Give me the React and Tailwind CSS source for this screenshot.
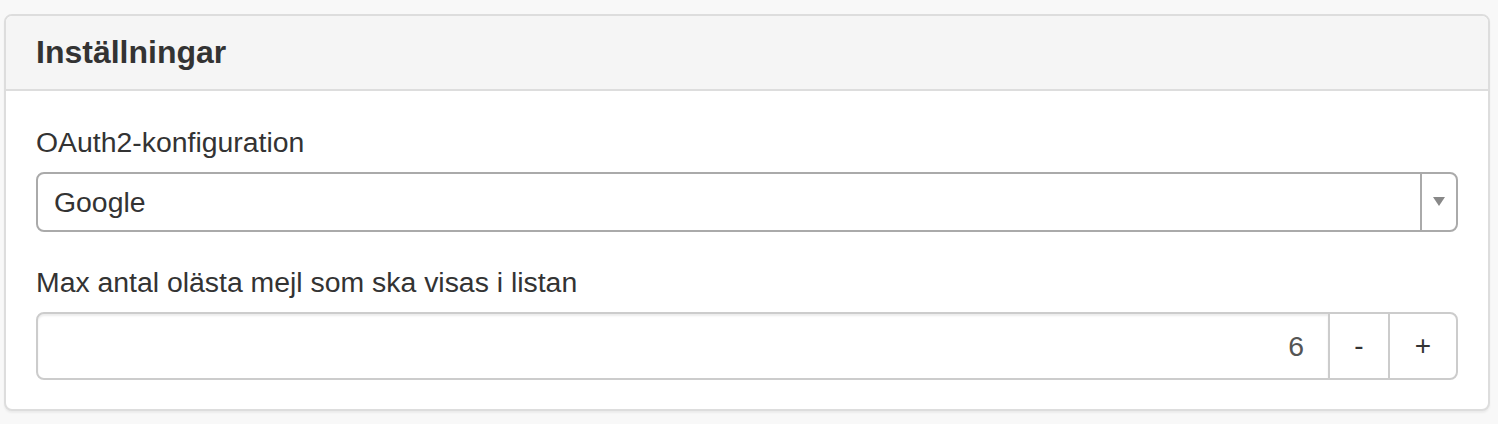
import React, { useState } from 'react';

const App = () => {
    const [count, setCount] = useState(6);

    return (
        <div className="min-h-[424px] bg-[#f8f8f8] pl-[4px] pr-[8px] pt-[14px] font-['Liberation_Sans',Arial,sans-serif] text-[#333]">
            <div className="rounded-[8px] border-2 border-[#ddd] bg-white shadow-[0_2px_2px_rgba(0,0,0,0.05)]">
                {/* Panel heading */}
                <div className="rounded-t-[6px] border-b-2 border-[#ddd] bg-[#f5f5f5] px-[30px] py-[19px]">
                    <h3 className="text-[32px] font-bold leading-[35px]">Inställningar</h3>
                </div>

                {/* Panel body */}
                <div className="px-[30px] pt-[31px] pb-[29px]">
                    <label className="mb-[10px] block text-[28.4px] leading-[40px]">OAuth2-konfiguration</label>
                    <div className="flex h-[60px] items-stretch overflow-hidden rounded-[8px] border-2 border-[#aaa] bg-white">
                        <span className="flex flex-1 items-center pl-[16px] text-[28.4px] text-[#333]">Google</span>
                        <span className="flex w-[36px] items-center justify-center border-l-2 border-[#aaa] pb-[2px]">
                            <svg width="12" height="9" viewBox="0 0 12 9">
                                <path d="M0 0 L12 0 L6 9 Z" fill="#888" />
                            </svg>
                        </span>
                    </div>

                    <label className="mt-[30px] mb-[10px] block text-[28.4px] leading-[40px]">Max antal olästa mejl som ska visas i listan</label>
                    <div className="flex h-[68px]">
                        <input
                            type="text"
                            value={count}
                            onChange={(e) => setCount(e.target.value)}
                            className="min-w-0 flex-1 rounded-l-[8px] border-2 border-[#ccc] bg-white px-[24px] text-right text-[28.4px] text-[#555] shadow-[inset_0_2px_2px_rgba(0,0,0,0.075)] outline-none"
                        />
                        <button
                            onClick={() => setCount(Number(count) - 1)}
                            className="-ml-[2px] w-[62px] border-2 border-[#ccc] bg-white text-[28px] text-[#333]"
                        >
                            -
                        </button>
                        <button
                            onClick={() => setCount(Number(count) + 1)}
                            className="-ml-[2px] w-[70px] rounded-r-[8px] border-2 border-[#ccc] bg-white text-[28px] text-[#333]"
                        >
                            +
                        </button>
                    </div>
                </div>
            </div>
        </div>
    );
};

export default App;
